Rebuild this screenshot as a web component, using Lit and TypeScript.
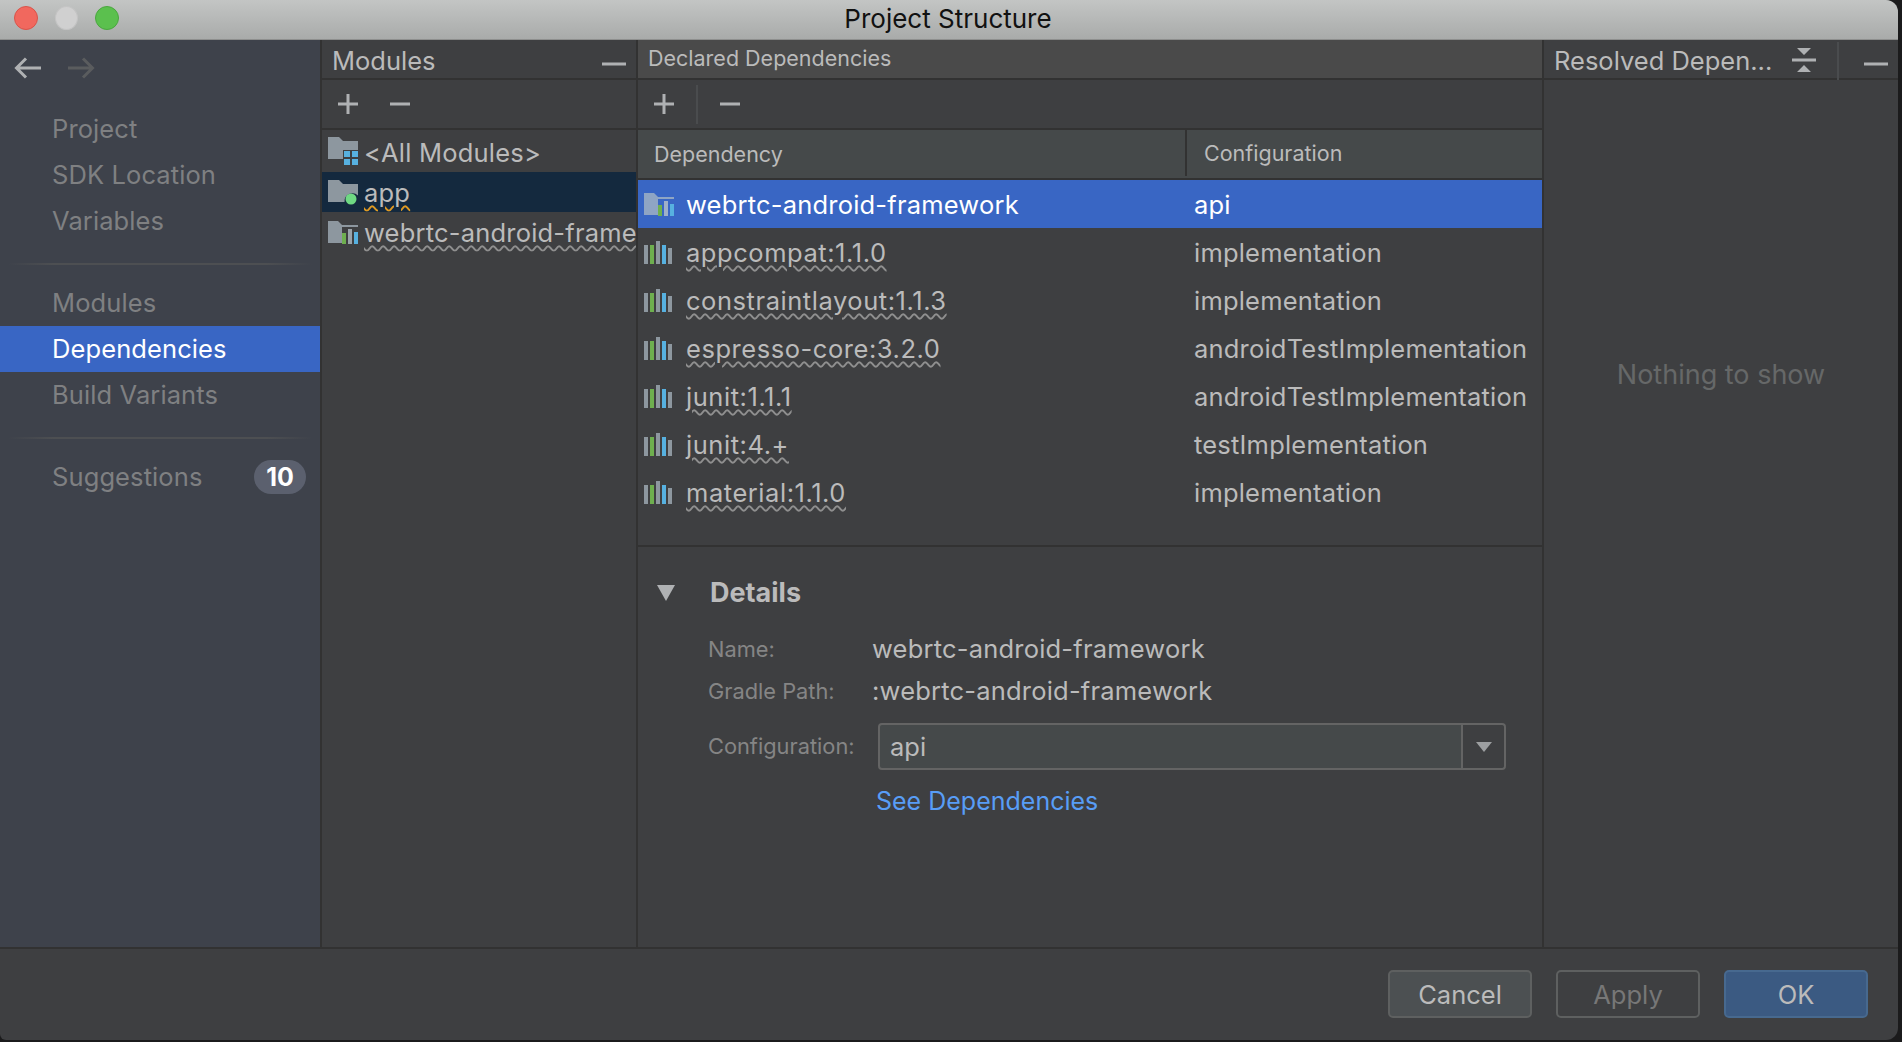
import { LitElement, html, css } from "lit";
import { customElement } from "lit/decorators.js";

const modIcon = (selected = false) => html`<svg class="ic" width="30" height="24" viewBox="0 0 30 24">
  <path d="M0 0h10l4 4h16v2H14v16H0z" fill="${selected ? "#8fa5c4" : "#8d979f"}"/>
  <rect x="14" y="12" width="4" height="11" fill="#6eaf4f"/>
  <rect x="20" y="8" width="4" height="15" fill="${selected ? "#9fb0c8" : "#9aa3aa"}"/>
  <rect x="26" y="11" width="4" height="12" fill="#57b1e0"/>
</svg>`;

const barsIcon = html`<svg class="ic" width="30" height="24" viewBox="0 0 30 24">
  <rect x="0" y="4" width="4" height="19" fill="#8d979f"/>
  <rect x="6" y="4" width="4" height="19" fill="#6eaf4f"/>
  <rect x="12" y="0" width="4" height="23" fill="#8d979f"/>
  <rect x="18" y="4" width="4" height="19" fill="#57b1e0"/>
  <rect x="24" y="7" width="4" height="16" fill="#8d979f"/>
</svg>`;

const plus = html`<svg width="20" height="20" viewBox="0 0 20 20"><path d="M8.500 0h3v8.500H20v3h-8.500V20h-3v-8.500H0v-3h8.500z" fill="#afb1b3"/></svg>`;
const minus = html`<svg width="20" height="20" viewBox="0 0 20 20"><rect y="8.500" width="20" height="3" fill="#afb1b3"/></svg>`;
const hide = html`<svg width="24" height="4" viewBox="0 0 24 4"><rect width="24" height="3" y="0.500" fill="#afb1b3"/></svg>`;

const deps: [string, string][] = [
  ["appcompat:1.1.0", "implementation"],
  ["constraintlayout:1.1.3", "implementation"],
  ["espresso-core:3.2.0", "androidTestImplementation"],
  ["junit:1.1.1", "androidTestImplementation"],
  ["junit:4.+", "testImplementation"],
  ["material:1.1.0", "implementation"],
];

@customElement("app-root")
export class AppRoot extends LitElement {
  static styles = css`
    :host {
      display: block;
      width: 1902px;
      height: 1042px;
      background: #1b1b1c;
      font-family: Inter, "Liberation Sans", Arial, sans-serif;
      color: #bbbbbb;
      overflow: hidden;
    }
    .win {
      width: 1898px;
      height: 1040px;
      background: #3e3f41;
      border-radius: 0 12px 12px 6px;
      overflow: hidden;
      display: flex;
      flex-direction: column;
    }
    .title {
      height: 40px;
      flex: none;
      background: linear-gradient(#c3c5c4, #a9abaa);
      border-bottom: 1px solid #8e8f8e;
      box-sizing: border-box;
      display: flex;
      align-items: center;
      position: relative;
      justify-content: center;
      color: #111;
      font-size: 26px;
      padding: 0 2px 2px 0;
    }
    .lights {
      position: absolute;
      left: 14px;
      top: 6px;
      display: flex;
      gap: 17px;
    }
    .light {
      width: 24px;
      height: 24px;
      border-radius: 50%;
      box-sizing: border-box;
    }
    .red { background: #f1685e; border: 1px solid #d9544a; }
    .gray { background: #d0d0d0; border: 1px solid #c4c4c4; width: 23px; }
    .green { background: #5bc04e; border: 1px solid #4aa73f; }
    .main {
      flex: 1;
      display: grid;
      grid-template-columns: 320px 316px 906px 1fr;
      min-height: 0;
    }
    .side {
      background: #3e424b;
      font-size: 25.500px;
      letter-spacing: 0.1px;
      color: #7f8082;
      display: flex;
      flex-direction: column;
    }
    .nav {
      height: 66px;
      display: flex;
      align-items: flex-start;
      padding: 17px 0 0 14px;
      gap: 25px;
      box-sizing: border-box;
    }
    .item {
      height: 46px;
      flex: none;
      display: flex;
      align-items: center;
      justify-content: space-between;
      padding: 0 14px 2px 52px;
      box-sizing: border-box;
    }
    .item.sel { background: #3966c4; color: #fff; }
    .sep {
      height: 2px;
      margin: 0 8px;
      background: linear-gradient(90deg, #3e424b, #4d4f52 15%, #4d4f52 85%, #3e424b);
    }
    .sep.a { margin-top: 19px; margin-bottom: 15px; }
    .sep.b { margin-top: 19px; margin-bottom: 15px; }
    .badge {
      background: #5b606e;
      color: #fff;
      font-weight: 700;
      font-size: 25px;
      letter-spacing: 0;
      border-radius: 17px;
      width: 52px;
      height: 34px;
      margin-top: 2px;
      display: flex;
      align-items: center;
      justify-content: center;
    }
    .pane {
      border-left: 2px solid #323232;
      display: flex;
      flex-direction: column;
      min-width: 0;
      box-sizing: border-box;
    }
    .head {
      height: 40px;
      flex: none;
      border-bottom: 2px solid #323232;
      box-sizing: border-box;
      display: flex;
      align-items: center;
      font-size: 25.500px;
      padding: 2px 0 0 10px;
      color: #bbbbbb;
      position: relative;
    }
    .head.dec {
      background: #4a4a4a;
      font-size: 21.500px;
      padding: 0 0 2px 10px;
    }
    .head .hide { position: absolute; right: 10px; top: 17px; line-height: 0; }
    .tools {
      height: 50px;
      flex: none;
      border-bottom: 2px solid #323232;
      box-sizing: border-box;
      display: flex;
      align-items: center;
      gap: 32px;
      padding-left: 16px;
    }
    .tools.dec { gap: 23px; }
    .tools svg { display: block; }
    .tools .div { width: 2px; height: 39px; background: #4a4c4e; margin: 0 -1px; }
    .mlist { flex: 1; overflow: hidden; font-size: 25.500px; letter-spacing: 0.2px; }
    .mrow {
      display: flex;
      align-items: center;
      gap: 6px;
      padding-left: 6px;
      white-space: nowrap;
      color: #bbbbbb;
      overflow: hidden;
    }
    .mrow .ic { flex: none; display: block; }
    .mrow.a { height: 42px; }
    .mrow.a span { padding-top: 2px; }
    .mrow.b { height: 40px; background: #14293e; }
    .mrow.c { height: 42px; }
    .mrow.c span { padding-bottom: 2px; }
    .wave {
      text-decoration: underline wavy #8f8f8f 1.500px;
      text-underline-offset: 3px;
    }
    .wave.o { text-decoration-color: #e09a22; }
    .thead {
      height: 50px;
      flex: none;
      background: #45494a;
      border-bottom: 2px solid #323232;
      box-sizing: border-box;
      display: grid;
      grid-template-columns: 547px 1fr;
      font-size: 21.500px;
      align-items: stretch;
    }
    .thead div { display: flex; align-items: center; padding-left: 16px; box-sizing: border-box; }
    .thead div + div { border-left: 2px solid #323232; height: 46px; padding-left: 17px; }
    .trow {
      height: 48px;
      display: grid;
      grid-template-columns: 556px 1fr;
      align-items: center;
      font-size: 25.500px;
      letter-spacing: 0.2px;
      white-space: nowrap;
      box-sizing: border-box;
      padding-top: 1px;
    }
    .trow.sel { background: #3966c4; color: #fff; }
    .cell1 { display: flex; align-items: center; gap: 12px; padding-left: 6px; }
    .trows { flex: none; height: 367px; border-bottom: 2px solid #323232; box-sizing: border-box; }
    .details { flex: 1; padding: 28px 0 0 0; }
    .dhead { display: flex; align-items: center; height: 36px; }
    .tri { width: 0; height: 0; border-left: 9px solid transparent; border-right: 9px solid transparent; border-top: 16px solid #afb1b3; margin: 0 35px 0 19px; }
    .dhead b { font-size: 27px; color: #bbb; padding-bottom: 2px; }
    .form { display: grid; grid-template-columns: 164px 1fr; padding: 0 0 0 70px; margin-top: 17px; }
    .lbl { font-size: 21.800px; color: #858585; display: flex; align-items: center; }
    .val { font-size: 25.500px; letter-spacing: 0.2px; display: flex; align-items: center; padding-bottom: 2px; box-sizing: border-box; }
    .form .r { height: 42px; }
    .lbl.c { margin-top: 9px; }
    .combo {
      width: 628px;
      height: 47px;
      margin: 11px 0 0 6px;
      box-sizing: border-box;
      border: 2px solid #646464;
      border-radius: 4px;
      background: #45494a;
      display: flex;
      font-size: 25.500px;
      align-items: center;
      padding-left: 10px;
    }
    .combo span { flex: 1; }
    .combo i {
      width: 43px;
      height: 100%;
      background: #3e3f41;
      border-left: 2px solid #646464;
      box-sizing: border-box;
      display: flex;
      align-items: center;
      justify-content: center;
      border-radius: 0 3px 3px 0;
    }
    .combo i::after {
      content: "";
      border-left: 8px solid transparent;
      border-right: 8px solid transparent;
      border-top: 10px solid #9d9fa1;
    }
    .link { color: #589df6; font-size: 25px; margin: 13px 0 0 4px; height: 36px; display: flex; align-items: center; }
    .empty { flex: 1; display: flex; align-items: center; justify-content: center; color: #666868; font-size: 27px; padding-bottom: 278px; }
    .rhead .coll { position: absolute; left: 248px; top: 7px; line-height: 0; }
    .rhead .vd { position: absolute; left: 293px; top: 2px; width: 2px; height: 38px; background: #4a4c4e; }
    .foot {
      height: 93px;
      flex: none;
      border-top: 2px solid #323232;
      box-sizing: border-box;
      display: flex;
      justify-content: flex-end;
      gap: 24px;
      padding: 21px 30px 0 0;
    }
    .btn {
      width: 144px;
      height: 48px;
      box-sizing: border-box;
      border: 2px solid #5e6060;
      border-radius: 5px;
      display: flex;
      align-items: center;
      justify-content: center;
      font-size: 25.500px;
      color: #bbb;
    }
    .btn.cancel { background: #4c5052; }
    .btn.apply { color: #777; }
    .btn.ok { background: #3b5a82; border-color: #47698f; }
    .name { letter-spacing: 0.55px; }
  `;

  render() {
    return html`<div class="win">
      <div class="title">
        <div class="lights"><div class="light red"></div><div class="light gray"></div><div class="light green"></div></div>
        Project Structure
      </div>
      <div class="main">
        <div class="side">
          <div class="nav">
            <svg width="28" height="22" viewBox="0 0 28 22"><path d="M27 11H3M12 1.500L2.500 11l9.500 9.500" fill="none" stroke="#afb1b3" stroke-width="3"/></svg>
            <svg width="28" height="22" viewBox="0 0 28 22"><path d="M1 11h24M16 1.500l9.500 9.500-9.500 9.500" fill="none" stroke="#5a5c5e" stroke-width="3"/></svg>
          </div>
          <div class="item">Project</div>
          <div class="item">SDK Location</div>
          <div class="item">Variables</div>
          <div class="sep a"></div>
          <div class="item">Modules</div>
          <div class="item sel">Dependencies</div>
          <div class="item">Build Variants</div>
          <div class="sep b"></div>
          <div class="item">Suggestions<span class="badge">10</span></div>
        </div>

        <div class="pane">
          <div class="head">Modules<span class="hide">${hide}</span></div>
          <div class="tools">${plus}${minus}</div>
          <div class="mlist">
            <div class="mrow a">
              <svg class="ic" width="30" height="28" viewBox="0 0 30 28">
                <path d="M0 0h11l4 4h15v9H15v9H0z" fill="#8d979f"/>
                <path d="M16 14h6v6h-6zM24 14h6v6h-6zM16 22h6v6h-6zM24 22h6v6h-6z" fill="#57b1e0"/>
              </svg>
              <span>&lt;All Modules&gt;</span>
            </div>
            <div class="mrow b">
              <svg class="ic" width="30" height="25" viewBox="0 0 30 25">
                <path d="M0 0h11l4 4h15v11.500a8 8 0 0 0-13.500 6.500H0z" fill="#8d979f"/>
                <circle cx="23" cy="19" r="5.500" fill="#6fd983"/>
              </svg>
              <span class="wave o">app</span>
            </div>
            <div class="mrow c">${modIcon()}<span class="wave">webrtc-android-framework</span></div>
          </div>
        </div>

        <div class="pane">
          <div class="head dec">Declared Dependencies</div>
          <div class="tools dec">${plus}<span class="div"></span>${minus}</div>
          <div class="thead"><div>Dependency</div><div>Configuration</div></div>
          <div class="trows">
            <div class="trow sel"><div class="cell1">${modIcon(true)}<span>webrtc-android-framework</span></div><div>api</div></div>
            ${deps.map(([n, c]) => html`<div class="trow"><div class="cell1">${barsIcon}<span class="wave name">${n}</span></div><div>${c}</div></div>`)}
          </div>
          <div class="details">
            <div class="dhead"><span class="tri"></span><b>Details</b></div>
            <div class="form">
              <div class="lbl r">Name:</div><div class="val r">webrtc-android-framework</div>
              <div class="lbl r">Gradle Path:</div><div class="val r">:webrtc-android-framework</div>
              <div class="lbl c">Configuration:</div>
              <div class="combo"><span>api</span><i></i></div>
              <div></div><div class="link">See Dependencies</div>
            </div>
          </div>
        </div>

        <div class="pane">
          <div class="head rhead">Resolved Depen...
            <span class="coll"><svg width="24" height="26" viewBox="0 0 24 26"><path d="M5 1h14l-7 7zM0 11.500h24v3H0zM12 18l7 7H5z" fill="#afb1b3"/></svg></span>
            <span class="vd"></span>
            <span class="hide">${hide}</span>
          </div>
          <div class="empty">Nothing to show</div>
        </div>
      </div>
      <div class="foot">
        <div class="btn cancel">Cancel</div>
        <div class="btn apply">Apply</div>
        <div class="btn ok">OK</div>
      </div>
    </div>`;
  }
}
